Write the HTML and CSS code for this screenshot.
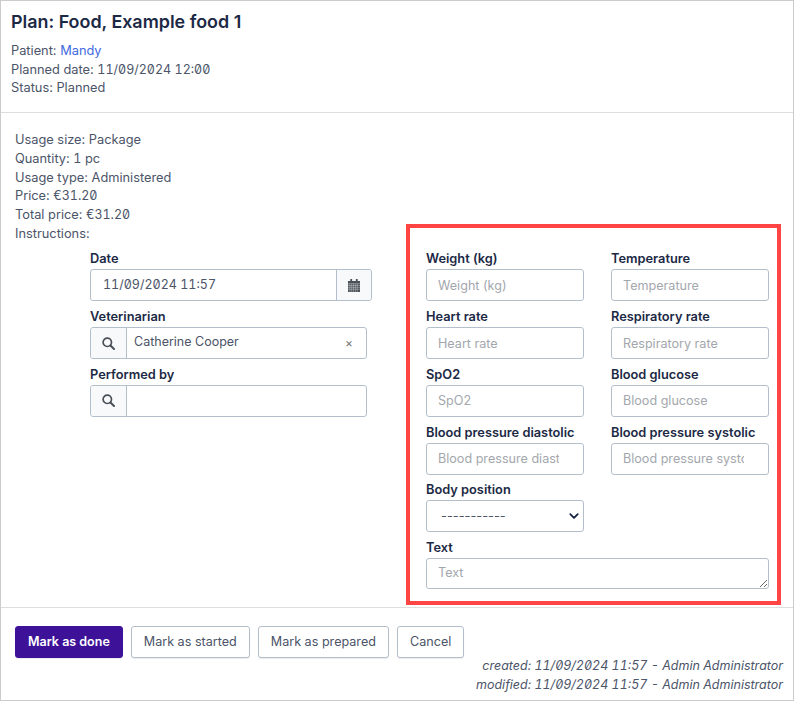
FILE: index.html
```html
<!DOCTYPE html>
<html lang="en">
<head>
<meta charset="utf-8">
<title>Plan: Food, Example food 1</title>
<link rel="stylesheet" href="styles.css">
</head>
<body>
<main class="card">
  <header class="head">
    <h1>Plan: Food, Example food 1</h1>
    <p>Patient: <a href="#">Mandy</a></p>
    <p>Planned date: <span class="num">11/09/2024 12:00</span></p>
    <p>Status: Planned</p>
  </header>
  <section class="body">
    <div class="details">
      <p>Usage size: Package</p>
      <p>Quantity: <span class="num">1</span> pc</p>
      <p>Usage type: Administered</p>
      <p>Price: <span class="num">€31.20</span></p>
      <p>Total price: <span class="num">€31.20</span></p>
      <p>Instructions:</p>
    </div>
    <form class="columns">
      <div class="left">
        <div class="field">
          <label>Date</label>
          <div class="group date">
            <span class="value num nudge">11/09/2024 11:57</span>
            <span class="addon addon-end">
              <svg width="12" height="13" viewBox="0 0 13 14"><path fill="#495057" d="M2.500 0h2v2h4V0h2v2H13v12H0V2h2.500z"/><path stroke="#c9ccd0" stroke-width=".5" fill="none" d="M0 5h13M0 7h13M0 9h13M0 11h13M2 5v9M4 5v9M6 5v9M8 5v9M10 5v9"/></svg>
            </span>
          </div>
        </div>
        <div class="field">
          <label>Veterinarian</label>
          <div class="group lookup">
            <span class="addon addon-start">
              <svg width="13" height="13" viewBox="0 0 13 13"><circle cx="5.300" cy="5.300" r="4.200" fill="none" stroke="#495057" stroke-width="1.700"/><path d="M8.500 8.500l3.500 3.500" stroke="#495057" stroke-width="2" stroke-linecap="round"/></svg>
            </span>
            <span class="value tight">Catherine Cooper</span>
            <span class="clear">×</span>
          </div>
        </div>
        <div class="field">
          <label>Performed by</label>
          <div class="group lookup">
            <span class="addon addon-start">
              <svg width="13" height="13" viewBox="0 0 13 13"><circle cx="5.300" cy="5.300" r="4.200" fill="none" stroke="#495057" stroke-width="1.700"/><path d="M8.500 8.500l3.500 3.500" stroke="#495057" stroke-width="2" stroke-linecap="round"/></svg>
            </span>
            <span class="value"></span>
          </div>
        </div>
      </div>
      <div class="right">
        <div class="field"><label>Weight (kg)</label><input placeholder="Weight (kg)"></div>
        <div class="field"><label>Temperature</label><input placeholder="Temperature"></div>
        <div class="field"><label>Heart rate</label><input placeholder="Heart rate"></div>
        <div class="field"><label>Respiratory rate</label><input placeholder="Respiratory rate"></div>
        <div class="field"><label>SpO2</label><input placeholder="SpO2"></div>
        <div class="field"><label>Blood glucose</label><input placeholder="Blood glucose"></div>
        <div class="field"><label>Blood pressure diastolic</label><input placeholder="Blood pressure diastolic"></div>
        <div class="field"><label>Blood pressure systolic</label><input placeholder="Blood pressure systolic"></div>
        <div class="field"><label>Body position</label><select><option>-----------</option></select></div>
        <div class="field wide"><label>Text</label><textarea placeholder="Text" rows="1"></textarea></div>
      </div>
    </form>
  </section>
  <footer class="foot">
    <div class="actions">
      <button type="button" class="btn primary">Mark as done</button>
      <button type="button" class="btn">Mark as started</button>
      <button type="button" class="btn">Mark as prepared</button>
      <button type="button" class="btn">Cancel</button>
    </div>
    <div class="meta">
      <p>created: 11/09/2024 11:57 - Admin Administrator</p>
      <p>modified: 11/09/2024 11:57 - Admin Administrator</p>
    </div>
  </footer>
  <div class="annotation"></div>
</main>
</body>
</html>
```

FILE: styles.css
```css
* { box-sizing: border-box; }
html, body { margin: 0; padding: 0; background: #fff; }
body {
  font-family: Inter, "Liberation Sans", sans-serif;
  font-size: 12.800px;
  line-height: 18.600px;
  color: #4b5468;
}
p { margin: 0; }
.num {
  font-size: 12.500px;
  font-feature-settings: "tnum", "zero";
}
.card {
  position: relative;
  width: 794px;
  height: 701px;
  border: 1px solid #ccc;
  display: flex;
  flex-direction: column;
}
.head {
  height: 112px;
  padding: 10px 10px 0;
  border-bottom: 1px solid #dedede;
}
.head h1 {
  margin: 0 0 9px;
  font-size: 17.900px;
  line-height: 22px;
  font-weight: 600;
  color: #1c2945;
}
.head a { color: #4169e1; text-decoration: none; }
.body {
  height: 495px;
  padding: 18px 14px 0;
  border-bottom: 1px solid #dedede;
}
.details { line-height: 18.800px; }
.columns { display: flex; margin-top: -1px; }
.left { width: 282px; margin-left: 75px; }
.right {
  margin-left: 54px;
  display: grid;
  grid-template-columns: 158px 158px;
  column-gap: 27px;
  align-content: start;
}
.field { height: 57.800px; }
.wide { grid-column: 1 / 3; }
label {
  display: block;
  height: 26.500px;
  padding-top: 7.400px;
  line-height: 18px;
  font-weight: 600;
  color: #1c2945;
}
input, textarea, select, .group {
  height: 32px;
  border: 1px solid #b4bfcc;
  border-radius: 3px;
  background: #fff;
  font: inherit;
  color: #4b5468;
}
input, textarea, select { width: 100%; display: block; margin: 0; padding: 0 24px 0 11px; outline: none; }
textarea { height: 31px; padding: 5px 11px 0; resize: vertical; line-height: 18px; }
select {
  padding: 0 24px 0 14px;
  appearance: none;
  background: #fff url("data:image/svg+xml,%3Csvg xmlns='http://www.w3.org/2000/svg' viewBox='0 0 16 16'%3E%3Cpath fill='none' stroke='%23142040' stroke-linecap='round' stroke-linejoin='round' stroke-width='2.800' d='M2 5l6 6 6-6'/%3E%3C/svg%3E") no-repeat right 4px center / 10px 10px;
}
::placeholder { color: #a3a7ad; opacity: 1; font-size: 12.600px; }
.group { display: flex; align-items: stretch; }
.date { width: 282px; }
.lookup { width: 277px; }
.value { flex: 1; display: flex; align-items: center; padding-left: 12px; padding-bottom: 1px; font-size: 12.500px; }
.nudge { padding-bottom: 0; padding-top: 1px; }
.tight { padding-left: 7px; }
.addon {
  display: flex;
  align-items: center;
  justify-content: center;
  background: #f8f9fa;
}
.addon-start { width: 36px; border-right: 1px solid #b4bfcc; border-radius: 3px 0 0 3px; }
.addon-end { width: 35px; border-left: 1px solid #b4bfcc; border-radius: 0 3px 3px 0; }
.clear { width: 21px; font-size: 12px; color: #777; display: flex; align-items: center; }
.foot {
  flex: 1;
  padding: 18px 10px 0 14px;
}
.actions { display: flex; gap: 8px; }
.btn {
  height: 32px;
  padding: 0 12px;
  border: 1px solid #b4bfcc;
  border-radius: 3px;
  background: #fff;
  font: inherit;
  font-size: 12.600px;
  color: #4b5468;
  box-shadow: 0 1px 1px rgba(0, 0, 0, .08);
}
.btn.primary {
  background: #3d1299;
  border-color: #3d1299;
  color: #fff;
  font-weight: 600;
  font-size: 12.500px;
}
.meta {
  margin-top: -1px;
  text-align: right;
  font-style: italic;
  font-size: 12.500px;
  font-feature-settings: "tnum", "zero";
}
.annotation {
  position: absolute;
  left: 405px;
  top: 223px;
  width: 375px;
  height: 381px;
  border: 4px solid #ff4444;
  pointer-events: none;
}
```
